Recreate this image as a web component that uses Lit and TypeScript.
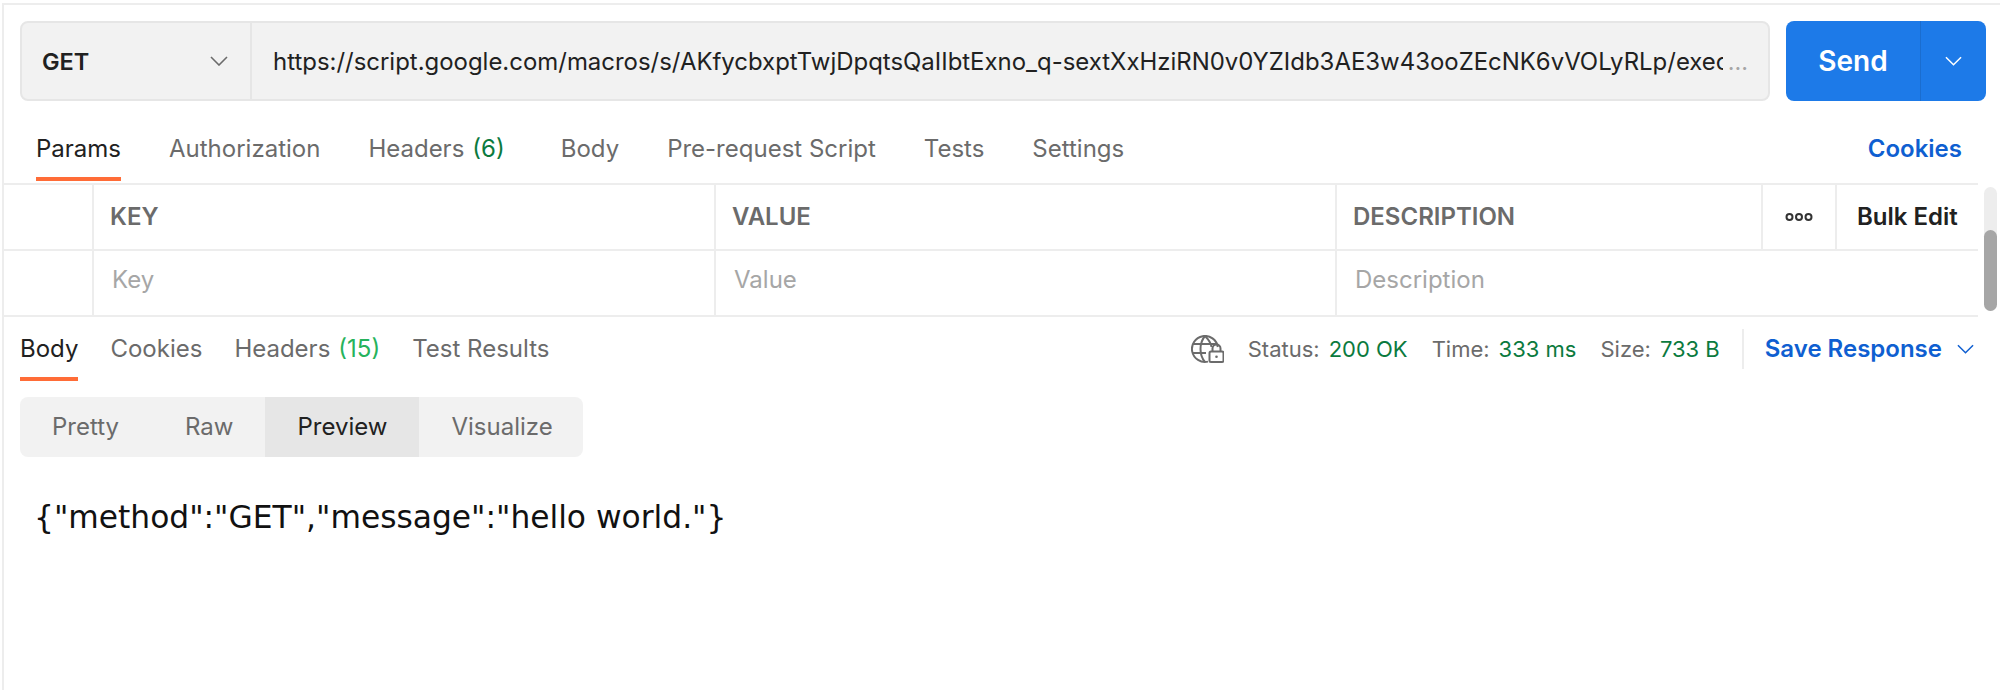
import { LitElement, html, css } from "lit";
import { customElement } from "lit/decorators.js";

const chevron = () => html`<svg viewBox="0 0 18 10" fill="none" stroke="currentColor" stroke-width="1.6"><path d="M1 1l8 8 8-8" /></svg>`;

@customElement("app-root")
export class AppRoot extends LitElement {
  static styles = css`
    :host { display: block; width: 2000px; height: 690px; background: #fff; font-family: Inter, "Noto Sans", sans-serif; color: #212121; overflow: hidden; }
    * { box-sizing: border-box; }
    .frame { margin: 3px 0 0 2px; height: 687px; border-top: 2px solid #ededed; border-left: 2px solid #ededed; display: flex; flex-direction: column; }
    .urlrow { display: flex; gap: 16px; padding: 16px 14px 0 16px; height: 96px; }
    .bar { flex: 1; min-width: 0; display: flex; height: 80px; background: #f2f2f2; border: 2px solid #e6e6e6; border-radius: 8px; align-items: stretch; }
    .method { width: 230px; flex: none; display: flex; align-items: center; justify-content: space-between; padding: 0 22px 0 20px; border-right: 2px solid #e6e6e6; font-size: 23.5px; font-weight: 600; }
    .method svg { width: 18px; height: 10px; color: #6b6b6b; }
    .url { flex: 1; min-width: 0; display: flex; align-items: center; padding: 0 20px 0 21px; font-size: 23.95px; }
    .url-text { flex: 1; min-width: 0; overflow: hidden; white-space: nowrap; }
    .dots { flex: none; color: #a6a6a6; margin-left: 5px; font-size: 23.4px; }
    .send { flex: none; width: 200px; height: 80px; display: flex; background: #1d7ae8; border-radius: 8px; color: #fff; }
    .send-main { width: 135px; display: flex; align-items: center; justify-content: center; font-size: 28px; font-weight: 600; border-right: 1px solid #1a6dcf; }
    .send-more { flex: 1; display: flex; align-items: center; justify-content: center; }
    .send-more svg { width: 17px; height: 10px; }
    .tabs { height: 82px; display: flex; align-items: stretch; justify-content: space-between; padding: 0 38px 0 32px; }
    .tablist { display: flex; gap: 48px; }
    .tab { position: relative; display: flex; align-items: center; padding-top: 12px; font-size: 24px; color: #6b6b6b; white-space: nowrap; }
    .tab.on { color: #212121; }
    .tab.on::after { content: ""; position: absolute; left: 0; right: 0; bottom: 2px; height: 4px; background: #ff6c37; }
    .tab.wide { margin-right: 8px; }
    .count { color: #0b7a3e; margin-left: 8px; }
    .count.light { color: #26b35c; }
    .link { color: #0f5fd1; font-weight: 600; font-size: 24px; display: flex; align-items: center; padding-top: 12px; }
    .params { display: flex; height: 134px; }
    .table { width: 1974px; flex: none; border-top: 2px solid #ededed; }
    .tr { display: grid; grid-template-columns: 90px 622px 621px 426px 74px 1fr; height: 66px; border-bottom: 2px solid #ededed; }
    .tr .td { border-right: 2px solid #ededed; display: flex; align-items: center; padding-left: 16px; padding-bottom: 1px; font-size: 24px; white-space: nowrap; }
    .tr .td:last-child { border-right: none; }
    .th { font-weight: 600; color: #6b6b6b; }
    .tr .ph { color: #a6a6a6; padding-left: 18px; padding-bottom: 8px; }
    .span3 { grid-column: span 3; }
    .tr .more { padding: 0; justify-content: center; }
    .more svg { width: 28px; height: 10px; }
    .tr .bulk { font-weight: 600; color: #212121; padding-left: 20px; }
    .track { width: 13px; margin: 4px 0 6px 6px; background: #ededed; border-radius: 7px; display: flex; flex-direction: column; justify-content: flex-end; }
    .thumb { height: 81px; background: #a6a6a6; border-radius: 7px; }
    .resp { display: flex; height: 64px; justify-content: space-between; padding: 0 14px 0 16px; }
    .rtabs { display: flex; gap: 32px; }
    .rtabs .tab { padding-top: 0; padding-bottom: 2px; }
    .rtabs .tab.on::after { bottom: 0; }
    .meta { display: flex; align-items: center; font-size: 22px; color: #6b6b6b; white-space: nowrap; padding-bottom: 1px; }
    .meta svg.net { width: 33px; height: 28px; margin-right: 24px; color: #6b6b6b; }
    .stat { margin-right: 24px; display: flex; gap: 9px; }
    .stat.last { margin-right: 22px; }
    .stat b { font-weight: 400; color: #0b7a3e; }
    .sep { width: 2px; height: 40px; background: #ededed; margin: 0 21px 0 0; }
    .save { color: #0f5fd1; font-weight: 600; font-size: 24px; display: flex; align-items: center; gap: 15px; padding-right: 12px; }
    .save svg { width: 17px; height: 10px; }
    .seg-wrap { padding: 16px 16px 0; }
    .seg { display: inline-flex; height: 60px; background: #f2f2f2; border-radius: 8px; overflow: hidden; }
    .seg span { display: flex; align-items: center; padding: 0 32px 2px; font-size: 24px; color: #6b6b6b; }
    .seg span:first-child { padding-right: 34px; }
    .seg span:last-child { padding-right: 30px; }
    .seg span.on { background: #e6e6e6; color: #212121; }
    .json { padding: 42px 0 0 30px; font-family: "DejaVu Sans", sans-serif; font-size: 31.3px; color: #111; white-space: nowrap; }
  `;

  render() {
    const url = "https://script.google.com/macros/s/AKfycbxptTwjDpqtsQaIIbtExno_q-sextXxHziRN0v0YZIdb3AE3w43ooZEcNK6vVOLyRLp/exec";
    return html`
      <div class="frame">
        <div class="urlrow">
          <div class="bar">
            <div class="method"><span>GET</span>${chevron()}</div>
            <div class="url"><span class="url-text">${url}</span><span class="dots">...</span></div>
          </div>
          <div class="send">
            <div class="send-main">Send</div>
            <div class="send-more">${chevron()}</div>
          </div>
        </div>
        <div class="tabs">
          <div class="tablist">
            <div class="tab on">Params</div>
            <div class="tab">Authorization</div>
            <div class="tab wide">Headers<span class="count">(6)</span></div>
            <div class="tab">Body</div>
            <div class="tab">Pre-request Script</div>
            <div class="tab">Tests</div>
            <div class="tab">Settings</div>
          </div>
          <div class="link">Cookies</div>
        </div>
        <div class="params">
          <div class="table">
            <div class="tr">
              <div class="td"></div>
              <div class="td th">KEY</div>
              <div class="td th">VALUE</div>
              <div class="td th">DESCRIPTION</div>
              <div class="td more"><svg viewBox="0 0 28 10" fill="none" stroke="#333" stroke-width="2"><circle cx="4.5" cy="5" r="3"/><circle cx="14" cy="5" r="3"/><circle cx="23.5" cy="5" r="3"/></svg></div>
              <div class="td bulk">Bulk Edit</div>
            </div>
            <div class="tr">
              <div class="td"></div>
              <div class="td ph">Key</div>
              <div class="td ph">Value</div>
              <div class="td ph span3">Description</div>
            </div>
          </div>
          <div class="track"><div class="thumb"></div></div>
        </div>
        <div class="resp">
          <div class="rtabs">
            <div class="tab on">Body</div>
            <div class="tab">Cookies</div>
            <div class="tab">Headers<span class="count light">(15)</span></div>
            <div class="tab">Test Results</div>
          </div>
          <div class="meta">
            <svg class="net" viewBox="0 0 33 28" fill="none" stroke="currentColor" stroke-width="2">
              <path d="M17 26.6A13 13 0 1 1 26.8 12" />
              <path d="M2 9h24M2 18h13" />
              <path d="M14 1C8 8 8 20 14 27M14 1C18 5 20 8 20.5 12" />
              <rect x="18.5" y="16.5" width="14" height="10.5" rx="1.5" />
              <path d="M21.5 16.5v-3a4 4 0 0 1 8 0v3" />
              <circle cx="25.5" cy="21.8" r="1.3" fill="currentColor" stroke="none" />
            </svg>
            <div class="stat">Status: <b>200 OK</b></div>
            <div class="stat">Time: <b>333 ms</b></div>
            <div class="stat last">Size: <b>733 B</b></div>
            <div class="sep"></div>
            <div class="save">Save Response ${chevron()}</div>
          </div>
        </div>
        <div class="seg-wrap">
          <div class="seg">
            <span>Pretty</span><span>Raw</span><span class="on">Preview</span><span>Visualize</span>
          </div>
        </div>
        <div class="json">{"method":"GET","message":"hello world."}</div>
      </div>
    `;
  }
}
